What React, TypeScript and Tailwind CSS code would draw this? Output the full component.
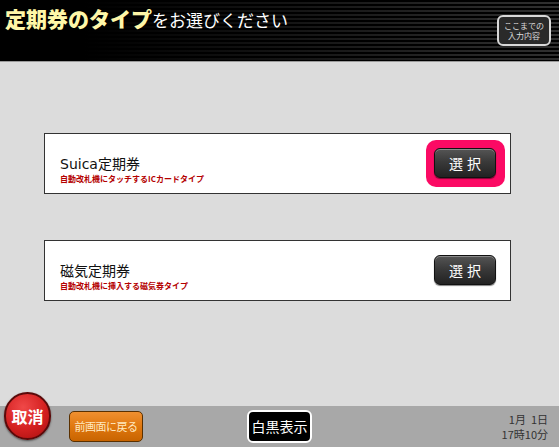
import React from "react";

const jp = "font-['Noto_Sans_CJK_JP',sans-serif]";

function SelectButton() {
  return (
    <div className="flex h-[30px] w-[62px] items-center justify-center rounded-[6px] border border-[#111] bg-[linear-gradient(180deg,#555_0%,#3a3a3a_45%,#222_100%)] shadow-[inset_0_1px_0_#8a8a8a,0_1px_1px_rgba(0,0,0,0.5)]">
      <span className={`${jp} text-[14px] tracking-[4px] pl-[4px] text-white`}>選択</span>
    </div>
  );
}

function TypeCard({ title, note, active }: { title: string; note: string; active?: boolean }) {
  return (
    <div className="flex h-[61px] items-center justify-between border border-[#333] bg-white pl-[15px] pr-[5px]">
      <div className="flex flex-col pt-[12px]">
        <span className="font-['DejaVu_Sans','Noto_Sans_CJK_JP',sans-serif] text-[14px] leading-[18px] text-[#111]">{title}</span>
        <span className={`${jp} mt-[1px] text-[8px] font-bold leading-[10px] text-[#b40000]`}>{note}</span>
      </div>
      <div className={`rounded-[10px] pt-[8px] pb-[9px] pl-[8px] pr-[9px] ${active ? "bg-[#fb0a64]" : ""}`}>
        <SelectButton />
      </div>
    </div>
  );
}

export default function App() {
  return (
    <div className={`${jp} flex h-[447px] w-[559px] flex-col overflow-hidden bg-[#dcdcdc]`}>
      {/* ヘッダー */}
      <div className="flex h-[61px] items-start justify-between bg-[linear-gradient(90deg,#000_0%,#000_15%,rgba(0,0,0,0.1)_100%),repeating-linear-gradient(180deg,#000_0px,#000_2px,#6a6a6a_3px,#000_4px)]">
        <div className="flex items-baseline pl-[5px] pt-[3px]">
          <span className="text-[21px] font-black leading-[30px] text-[#fff7a8]">定期券のタイプ</span>
          <span className="text-[17px] leading-[30px] text-white">をお選びください</span>
        </div>
        <div className="mr-[8px] mt-[15px] flex h-[31px] w-[54px] flex-col items-center justify-center rounded-[6px] border-2 border-[#d8d8d8] bg-[#2a2a2a]">
          <span className="text-[8px] leading-[10px] text-[#ddd]">ここまでの</span>
          <span className="text-[8px] leading-[10px] text-[#ddd]">入力内容</span>
        </div>
      </div>
      <div className="h-[1px] bg-[#9a9a9a]" />

      {/* 本体 */}
      <div className="flex flex-1 flex-col gap-[46px] pl-[44px] pr-[48px] pt-[71px]">
        <TypeCard title="Suica定期券" note="自動改札機にタッチするICカードタイプ" active />
        <TypeCard title="磁気定期券" note="自動改札機に挿入する磁気券タイプ" />
      </div>

      {/* フッター */}
      <div className="relative flex h-[41px] items-center bg-[#a8a8a8]">
        <div className="absolute left-[4px] top-[-14px] flex h-[48px] w-[47px] items-center justify-center rounded-full border-2 border-[#5a0a0a] bg-[radial-gradient(circle_at_40%_30%,#f04848_0%,#d42020_55%,#a50f0f_100%)] shadow-[0_1px_2px_rgba(0,0,0,0.5)]">
          <span className="text-[16px] font-bold text-white">取消</span>
        </div>
        <div className="ml-[69px] flex h-[31px] w-[74px] items-center justify-center rounded-[5px] border border-[#5a3000] bg-[linear-gradient(180deg,#f09030_0%,#e07810_50%,#c86400_100%)]">
          <span className="text-[11px] tracking-[-0.5px] text-[#ffe9c0]">前画面に戻る</span>
        </div>
        <div className="ml-[104px] flex h-[33px] w-[65px] items-center justify-center rounded-[6px] border-2 border-white bg-black">
          <span className="text-[14px] text-white">白黒表示</span>
        </div>
        <div className="ml-auto mr-[11px] flex flex-col items-end text-[11px] leading-[15px] text-[#333]">
          <span>1月&nbsp;&nbsp;1日</span>
          <span>17時10分</span>
        </div>
      </div>
    </div>
  );
}
